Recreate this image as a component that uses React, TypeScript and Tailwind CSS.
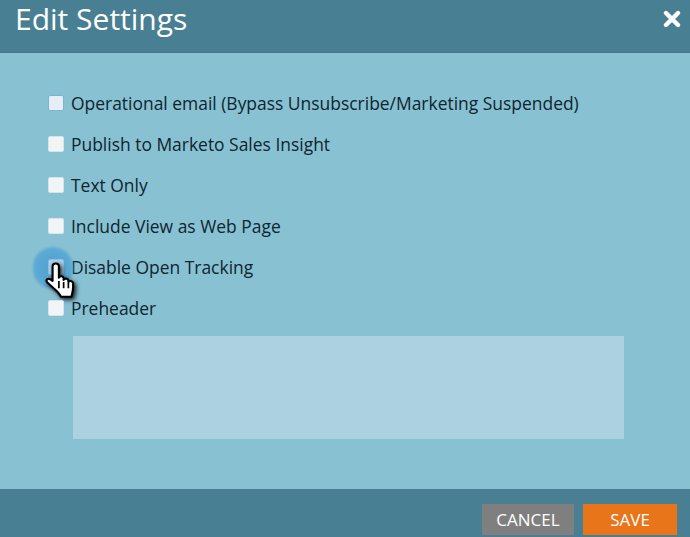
const rows = [
  { label: "Operational email (Bypass Unsubscribe/Marketing Suspended)", box: "bg-[#e6edf5] border-[#7fb0d6]" },
  { label: "Publish to Marketo Sales Insight", box: "bg-[#f1f5f6] border-[#d5e4ea]" },
  { label: "Text Only", box: "bg-[#f1f5f6] border-[#d5e4ea]" },
  { label: "Include View as Web Page", box: "bg-[#f1f5f6] border-[#d5e4ea]" },
  { label: "Disable Open Tracking", box: "bg-[#a9cfe6] border-[#8dbfe0]", hover: true },
  { label: "Preheader", box: "bg-[#f1f5f6] border-[#d5e4ea]" },
];

function Hand() {
  return (
    <svg width="32" height="40" viewBox="0 0 30 38" className="absolute left-[-3px] top-[3px] drop-shadow-[2px_2px_2px_rgba(0,0,0,0.85)]">
      <path
        d="M7 4c0-3.5 6-3.5 6 0V15c.5-2 4-2 4.5.3V17c.6-1.8 4-1.6 4.5.5V19c.6-1.5 4-1.2 4.5 1v4c0 3-1 6-1.5 9H15c-1.5-3-4-5.5-7-8l-6-5.5c-2-2.5.5-4.5 3-3L7 18V4z"
        fill="#fff"
        stroke="#000"
        strokeWidth="2"
        strokeLinejoin="round"
      />
      <path d="M13 18v7M17.5 19v6M22 20v5" stroke="#000" strokeWidth="1.6" fill="none" />
    </svg>
  );
}

export default function App() {
  return (
    <div className="w-[690px] h-[537px] flex flex-col overflow-hidden bg-[#88c1d2] font-['Open_Sans','Noto_Sans',sans-serif]">
      <header className="h-[53px] shrink-0 bg-[#487f93] border-b border-[#43788b] flex items-start justify-between pl-[15px] pr-[9px]">
        <h1 className="text-[30px] leading-[38px] text-white font-normal">Edit Settings</h1>
        <svg width="18" height="18" viewBox="0 0 18 18" className="mt-[10px]">
          <path d="M3 3l12 12M15 3L3 15" stroke="#fff" strokeWidth="4.4" strokeLinecap="round" />
        </svg>
      </header>
      <main className="flex-1 pt-[38px] pl-[48px]">
        <ul className="flex flex-col gap-[17px]">
          {rows.map((r) => (
            <li key={r.label} className="h-[24px] flex items-center gap-[7px] text-[17.45px] text-[#0f2530]">
              <span className="relative w-[16px] h-[16px] shrink-0">
                {r.hover && <span className="absolute left-[-15px] top-[-12px] w-[40px] h-[42px] rounded-full bg-[radial-gradient(circle,#4f9fd0_0%,#5aa8d4_55%,#6fb4d3_100%)] blur-[1px]" />}
                <span className={`absolute inset-0 rounded-[2px] border ${r.box}`} />
                {r.hover && <Hand />}
              </span>
              <span className="whitespace-nowrap">{r.label}</span>
            </li>
          ))}
        </ul>
        <div className="mt-[16px] ml-[25px] w-[551px] h-[103px] bg-[#acd2e1]" />
      </main>
      <footer className="h-[48px] shrink-0 bg-[#487f93] flex items-start justify-end gap-[9px] pt-[15px] pr-[13px]">
        <button className="w-[92px] h-[31px] bg-[#7f7f7f] text-white text-[17px]">CANCEL</button>
        <button className="w-[94px] h-[31px] bg-[#e8751a] text-white text-[17px]">SAVE</button>
      </footer>
    </div>
  );
}
